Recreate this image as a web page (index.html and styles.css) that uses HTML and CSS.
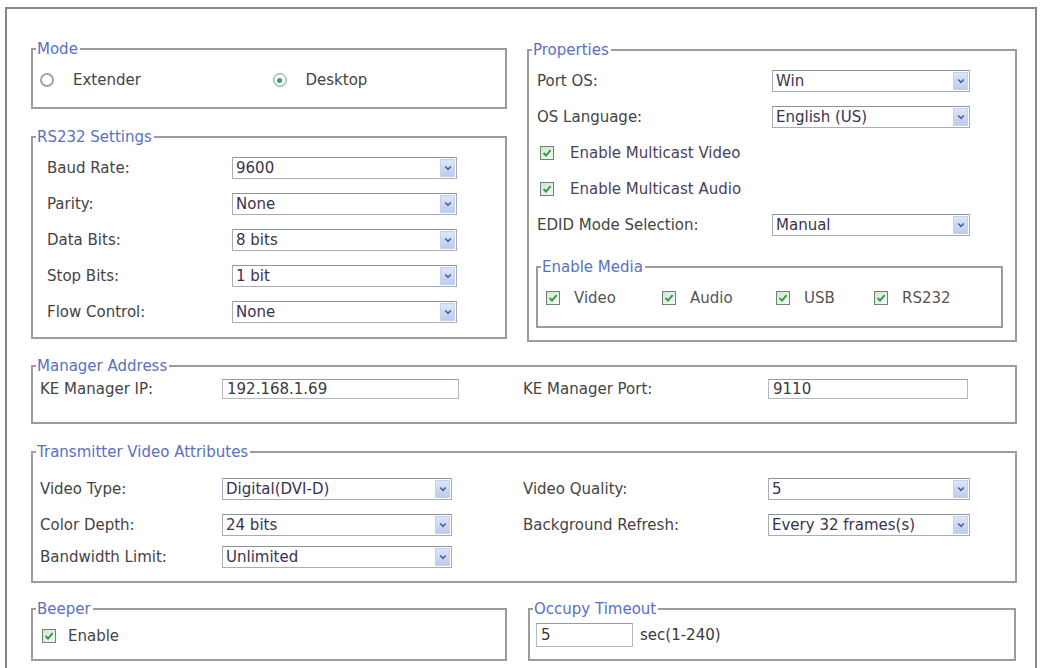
FILE: index.html
```html
<!DOCTYPE html>
<html lang="en">
<head>
  <meta charset="UTF-8">
  <title>KE Settings</title>
  <link rel="stylesheet" href="styles.css">
</head>
<body>
  <div class="panel">
    <div class="top">
      <div class="col-left">
        <fieldset class="box">
          <legend>Mode</legend>
          <div class="body mode-body">
            <label class="radio-item"><span class="radio"></span>Extender</label>
            <label class="radio-item"><span class="radio on"></span>Desktop</label>
          </div>
        </fieldset>

        <fieldset class="box">
          <legend>RS232 Settings</legend>
          <div class="body rs-body">
            <div class="row"><span class="lbl rs-lbl">Baud Rate:</span><div class="select rs-sel"><span class="val">9600</span><span class="arrow"><svg viewBox="0 0 8 6"><path d="M1.2 1.5 L4 4.3 L6.8 1.5"/></svg></span></div></div>
            <div class="row"><span class="lbl rs-lbl">Parity:</span><div class="select rs-sel"><span class="val">None</span><span class="arrow"><svg viewBox="0 0 8 6"><path d="M1.2 1.5 L4 4.3 L6.8 1.5"/></svg></span></div></div>
            <div class="row"><span class="lbl rs-lbl">Data Bits:</span><div class="select rs-sel"><span class="val">8 bits</span><span class="arrow"><svg viewBox="0 0 8 6"><path d="M1.2 1.5 L4 4.3 L6.8 1.5"/></svg></span></div></div>
            <div class="row"><span class="lbl rs-lbl">Stop Bits:</span><div class="select rs-sel"><span class="val">1 bit</span><span class="arrow"><svg viewBox="0 0 8 6"><path d="M1.2 1.5 L4 4.3 L6.8 1.5"/></svg></span></div></div>
            <div class="row"><span class="lbl rs-lbl">Flow Control:</span><div class="select rs-sel"><span class="val">None</span><span class="arrow"><svg viewBox="0 0 8 6"><path d="M1.2 1.5 L4 4.3 L6.8 1.5"/></svg></span></div></div>
          </div>
        </fieldset>
      </div>

      <fieldset class="box props">
        <legend>Properties</legend>
        <div class="body props-body">
          <div class="row"><span class="lbl pr-lbl">Port OS:</span><div class="select pr-sel"><span class="val">Win</span><span class="arrow"><svg viewBox="0 0 8 6"><path d="M1.2 1.5 L4 4.3 L6.8 1.5"/></svg></span></div></div>
          <div class="row"><span class="lbl pr-lbl">OS Language:</span><div class="select pr-sel"><span class="val">English (US)</span><span class="arrow"><svg viewBox="0 0 8 6"><path d="M1.2 1.5 L4 4.3 L6.8 1.5"/></svg></span></div></div>
          <div class="row"><label class="check-item pr-check"><span class="check"><svg viewBox="0 0 12 12"><path d="M2.6 6 L5 8.6 L9.6 3.2"/></svg></span>Enable Multicast Video</label></div>
          <div class="row"><label class="check-item pr-check"><span class="check"><svg viewBox="0 0 12 12"><path d="M2.6 6 L5 8.6 L9.6 3.2"/></svg></span>Enable Multicast Audio</label></div>
          <div class="row"><span class="lbl pr-lbl">EDID Mode Selection:</span><div class="select pr-sel"><span class="val">Manual</span><span class="arrow"><svg viewBox="0 0 8 6"><path d="M1.2 1.5 L4 4.3 L6.8 1.5"/></svg></span></div></div>

          <fieldset class="box media">
            <legend>Enable Media</legend>
            <div class="body media-body">
              <label class="check-item m-video"><span class="check"><svg viewBox="0 0 12 12"><path d="M2.6 6 L5 8.6 L9.6 3.2"/></svg></span>Video</label>
              <label class="check-item m-audio"><span class="check"><svg viewBox="0 0 12 12"><path d="M2.6 6 L5 8.6 L9.6 3.2"/></svg></span>Audio</label>
              <label class="check-item m-usb"><span class="check"><svg viewBox="0 0 12 12"><path d="M2.6 6 L5 8.6 L9.6 3.2"/></svg></span>USB</label>
              <label class="check-item"><span class="check"><svg viewBox="0 0 12 12"><path d="M2.6 6 L5 8.6 L9.6 3.2"/></svg></span>RS232</label>
            </div>
          </fieldset>
        </div>
      </fieldset>
    </div>

    <fieldset class="box manager">
      <legend>Manager Address</legend>
      <div class="body wide-body mgr-body">
        <span class="lbl">KE Manager IP:</span>
        <div class="input ip-input">192.168.1.69</div>
        <span></span>
        <span class="lbl">KE Manager Port:</span>
        <div class="input port-input">9110</div>
      </div>
    </fieldset>

    <fieldset class="box transmitter">
      <legend>Transmitter Video Attributes</legend>
      <div class="body wide-body tx-body">
        <span class="lbl">Video Type:</span>
        <div class="select tx-sel"><span class="val">Digital(DVI-D)</span><span class="arrow"><svg viewBox="0 0 8 6"><path d="M1.2 1.5 L4 4.3 L6.8 1.5"/></svg></span></div>
        <span></span>
        <span class="lbl">Video Quality:</span>
        <div class="select tx-sel-r"><span class="val">5</span><span class="arrow"><svg viewBox="0 0 8 6"><path d="M1.2 1.5 L4 4.3 L6.8 1.5"/></svg></span></div>

        <span class="lbl">Color Depth:</span>
        <div class="select tx-sel"><span class="val">24 bits</span><span class="arrow"><svg viewBox="0 0 8 6"><path d="M1.2 1.5 L4 4.3 L6.8 1.5"/></svg></span></div>
        <span></span>
        <span class="lbl">Background Refresh:</span>
        <div class="select tx-sel-r"><span class="val">Every 32 frames(s)</span><span class="arrow"><svg viewBox="0 0 8 6"><path d="M1.2 1.5 L4 4.3 L6.8 1.5"/></svg></span></div>

        <span class="lbl">Bandwidth Limit:</span>
        <div class="select tx-sel"><span class="val">Unlimited</span><span class="arrow"><svg viewBox="0 0 8 6"><path d="M1.2 1.5 L4 4.3 L6.8 1.5"/></svg></span></div>
      </div>
    </fieldset>

    <div class="bottom">
      <fieldset class="box">
        <legend>Beeper</legend>
        <div class="body beeper-body">
          <label class="check-item"><span class="check"><svg viewBox="0 0 12 12"><path d="M2.6 6 L5 8.6 L9.6 3.2"/></svg></span>Enable</label>
        </div>
      </fieldset>
      <fieldset class="box">
        <legend>Occupy Timeout</legend>
        <div class="body occupy-body">
          <div class="input timeout-input">5</div>
          <span class="unit">sec(1-240)</span>
        </div>
      </fieldset>
    </div>
  </div>
</body>
</html>
```

FILE: styles.css
```css
/* Base */
html, body {
  margin: 0;
  overflow: hidden;
  background: #fff;
}

body {
  font-family: "DejaVu Sans", Verdana, sans-serif;
  font-size: 15px;
  color: #444;
}

.panel {
  box-sizing: border-box;
  width: 1032px;
  height: 700px;
  margin: 7px 0 0 5px;
  border: 2px solid #878787;
  padding: 31px 18px 0 24px;
}

/* Group boxes */
.box {
  margin: 0;
  padding: 0;
  min-width: 0;
  border: 2px solid #9c9c9c;
}

.box legend {
  margin-left: 3px;
  padding: 0 2px 0 1px;
  line-height: 18px;
  color: #5a70c2;
}

.row {
  display: flex;
  align-items: center;
  height: 36px;
}

.lbl {
  white-space: nowrap;
}

.top {
  display: grid;
  grid-template-columns: 476px 490px;
  column-gap: 20px;
}

.col-left {
  display: flex;
  flex-direction: column;
  gap: 19px;
}

/* Mode */
.mode-body {
  display: flex;
  align-items: center;
  height: 24px;
  padding: 10px 0 15px 7px;
}

.radio-item {
  display: flex;
  align-items: center;
  gap: 19px;
  width: 241px;
}

.radio {
  box-sizing: border-box;
  width: 14px;
  height: 14px;
  border: 2px solid #a3a3a3;
  border-radius: 50%;
  background: #fff;
  display: flex;
  align-items: center;
  justify-content: center;
}

.radio.on {
  border: 1px solid #82ad92;
  box-shadow: inset 0 0 0 1px #cfe3d5;
}

.radio.on::after {
  content: "";
  width: 5px;
  height: 5px;
  border-radius: 50%;
  background: #3f9a63;
}

/* RS232 */
.rs-body {
  padding: 4px 0 7px 14px;
}

.rs-lbl {
  width: 185px;
}

.rs-sel {
  width: 225px;
}

/* Selects and inputs */
.select {
  box-sizing: border-box;
  display: flex;
  align-items: center;
  height: 22px;
  border: 1px solid #a7adb6;
  border-top-color: #8d939b;
  background: #fff;
  color: #3a3350;
}

.select .val {
  flex: 1;
  padding-left: 3px;
  white-space: nowrap;
  overflow: hidden;
}

.select .arrow {
  box-sizing: border-box;
  width: 15px;
  height: 18px;
  margin-right: 1px;
  background: linear-gradient(#dce6fb, #bccbf0);
  border: 1px solid #c4d1ee;
  display: flex;
  align-items: center;
  justify-content: center;
}

.select .arrow svg {
  width: 8px;
  height: 6px;
}

.select .arrow path {
  fill: none;
  stroke: #4d6189;
  stroke-width: 1.6;
}

.input {
  box-sizing: border-box;
  height: 20px;
  line-height: 18px;
  padding-left: 4px;
  border: 1px solid #b4b9bf;
  border-top-color: #979ca3;
  background: #fff;
  color: #3a3a3a;
}

/* Checkboxes */
.check-item {
  display: flex;
  align-items: center;
  gap: 14px;
  white-space: nowrap;
}

.check {
  box-sizing: border-box;
  flex: none;
  width: 14px;
  height: 14px;
  border: 1px solid #6e8572;
  background: linear-gradient(135deg, #d3e4d3, #f4f9f4);
}

.check svg {
  display: block;
  width: 12px;
  height: 12px;
}

.check path {
  fill: none;
  stroke: #2e9c42;
  stroke-width: 1.9;
}

/* Properties */
.props {
  margin-top: 1px;
}

.props-body {
  padding: 4px 12px 12px 8px;
}

.pr-lbl {
  width: 235px;
}

.pr-sel {
  width: 198px;
}

.pr-check {
  margin-left: 3px;
  gap: 16px;
  color: #4a3f5a;
}

.media {
  margin: 15px 0 0 -1px;
}

.media-body {
  display: flex;
  align-items: center;
  height: 24px;
  padding: 10px 0 16px 8px;
}

.media-body .check-item {
  color: #555;
}

.m-video {
  width: 116px;
}

.m-audio {
  width: 114px;
}

.m-usb {
  width: 98px;
}

/* Wide groups */
.wide-body {
  display: grid;
  grid-template-columns: 182px 237px 64px 245px 202px;
  align-items: center;
  padding-left: 7px;
}

.manager {
  margin-top: 15px;
}

.mgr-body {
  grid-template-rows: 24px;
  padding-top: 2px;
  padding-bottom: 21px;
}

.ip-input {
  width: 237px;
}

.port-input {
  width: 200px;
}

.transmitter {
  margin-top: 19px;
}

.tx-body {
  grid-template-rows: 36px 36px 28px;
  padding-top: 10px;
  padding-bottom: 10px;
}

.tx-sel {
  width: 230px;
}

.tx-sel-r {
  width: 202px;
}

/* Bottom row */
.bottom {
  display: grid;
  grid-template-columns: 476px 488px;
  column-gap: 21px;
  margin-top: 17px;
}

.beeper-body {
  display: flex;
  align-items: center;
  height: 20px;
  padding: 8px 0 13px 9px;
}

.beeper-body .check-item {
  gap: 12px;
}

.occupy-body {
  display: flex;
  align-items: center;
  gap: 7px;
  height: 24px;
  padding: 5px 0 12px 6px;
}

.timeout-input {
  width: 97px;
  height: 24px;
  line-height: 22px;
}

.unit {
  color: #3a3a3a;
}
```
